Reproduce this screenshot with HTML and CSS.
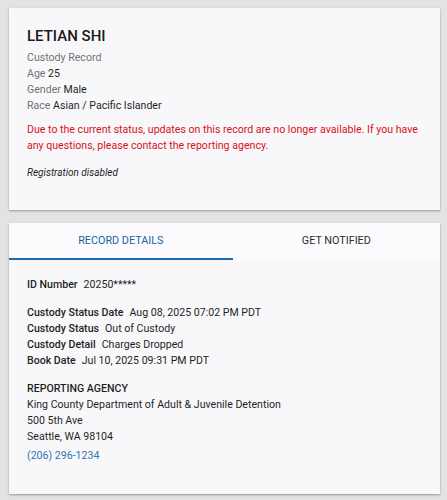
FILE: index.html
```html
<!DOCTYPE html>
<html lang="en">
<head>
<meta charset="utf-8">
<title>Custody Record</title>
<link rel="stylesheet" href="styles.css">
</head>
<body>
<main class="page">
  <section class="card summary">
    <h1 class="name">LETIAN SHI</h1>
    <div class="meta">
      <div class="muted">Custody Record</div>
      <div><span class="muted">Age</span> 25</div>
      <div><span class="muted">Gender</span> Male</div>
      <div><span class="muted">Race</span> Asian / Pacific Islander</div>
    </div>
    <p class="notice">Due to the current status, updates on this record are no longer available. If you have any questions, please contact the reporting agency.</p>
    <p class="disabled">Registration disabled</p>
  </section>

  <section class="card details">
    <nav class="tabs">
      <div class="tab active">RECORD DETAILS</div>
      <div class="tab">GET NOTIFIED</div>
    </nav>
    <div class="panel">
      <div class="row"><span class="label">ID Number</span><span class="value">20250*****</span></div>
      <div class="group">
        <div class="row"><span class="label">Custody Status Date</span><span class="value">Aug 08, 2025 07:02 PM PDT</span></div>
        <div class="row"><span class="label">Custody Status</span><span class="value">Out of Custody</span></div>
        <div class="row"><span class="label">Custody Detail</span><span class="value">Charges Dropped</span></div>
        <div class="row"><span class="label">Book Date</span><span class="value">Jul 10, 2025 09:31 PM PDT</span></div>
      </div>
      <div class="agency">
        <div class="label">REPORTING AGENCY</div>
        <div>King County Department of Adult &amp; Juvenile Detention</div>
        <div>500 5th Ave</div>
        <div>Seattle, WA 98104</div>
        <a class="phone" href="#">(206) 296-1234</a>
      </div>
    </div>
  </section>
</main>
</body>
</html>
```

FILE: styles.css
```css
html, body {
  margin: 0;
  padding: 0;
}
body {
  background: #e3e3e3;
  font-family: Roboto, "Liberation Sans", sans-serif;
  color: #1f1f1f;
  font-size: 10.6px;
  line-height: 16px;
}
.page {
  padding: 8px 7px 6px 9px;
  display: flex;
  flex-direction: column;
  gap: 13px;
}
.card {
  background: #f8f8fa;
  box-shadow: 0 1px 2px rgba(0, 0, 0, 0.35);
}
.summary {
  height: 202px;
  box-sizing: border-box;
  padding: 18px 18px 0 18px;
}
.name {
  margin: 0;
  font-size: 15px;
  line-height: 20px;
  font-weight: 500;
  color: #1a1a1a;
}
.meta {
  margin-top: 4px;
}
.muted {
  color: #737373;
}
.notice {
  margin: 8px 0 0;
  color: #d8111b;
}
.disabled {
  margin: 11px 0 0;
  font-style: italic;
  font-size: 10px;
}
.details {
  height: 271px;
  box-sizing: border-box;
}
.tabs {
  display: flex;
  background: #fbfbfd;
}
.tab {
  flex: 1 1 auto;
  text-align: center;
  height: 37px;
  box-sizing: border-box;
  padding-top: 10px;
  font-size: 10.8px;
  font-weight: 400;
  color: #2e2e2e;
  border-bottom: 2px solid transparent;
}
.tab.active {
  color: #1b63a3;
  border-bottom-color: #1e6aad;
}
.panel {
  padding: 17px 18px 0;
}
.row {
  display: flex;
  gap: 6px;
}
.label {
  font-weight: 500;
}
.group {
  margin-top: 12px;
}
.agency {
  margin-top: 12px;
  display: flex;
  flex-direction: column;
}
.phone {
  margin-top: 3px;
  color: #2f74b5;
  text-decoration: none;
}
```
